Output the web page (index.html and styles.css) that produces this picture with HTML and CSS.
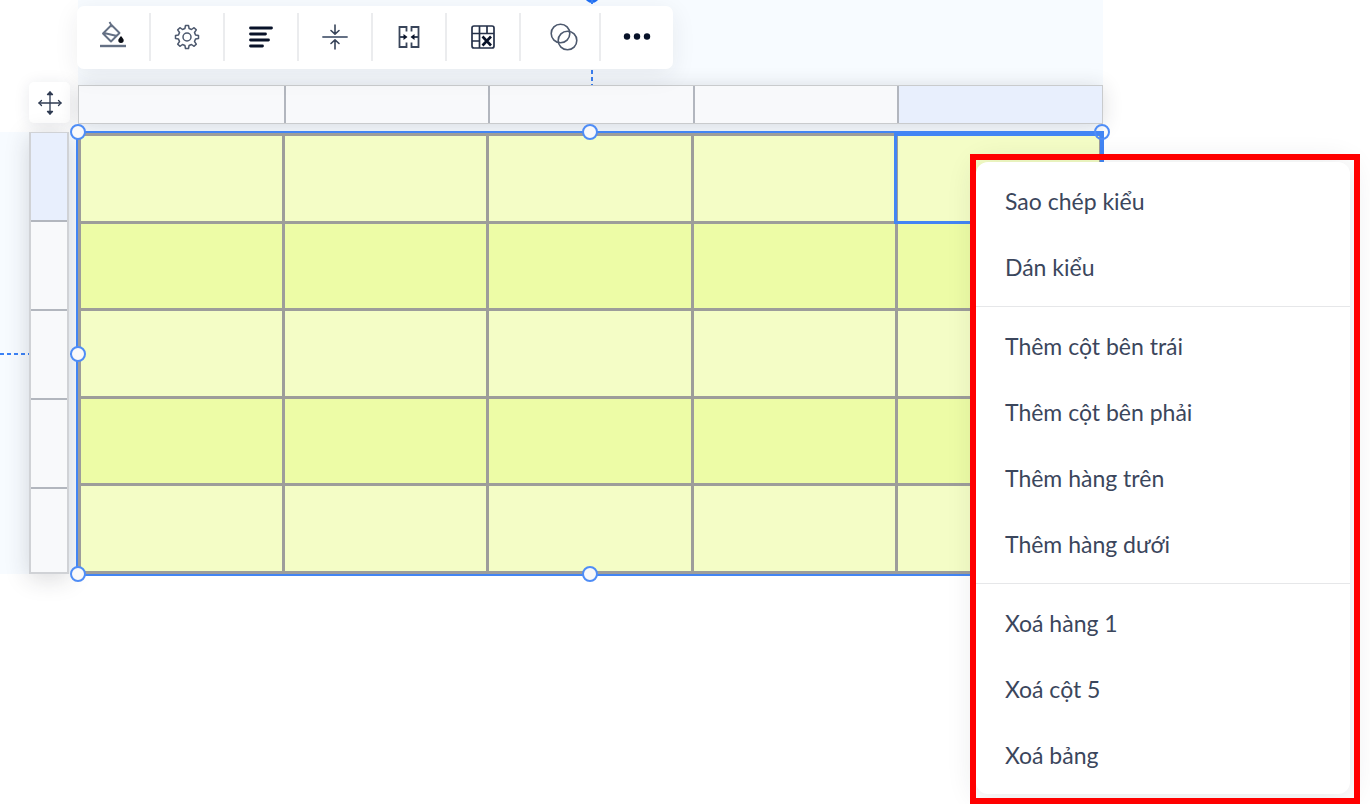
FILE: index.html
```html
<!DOCTYPE html>
<html lang="vi">
<head>
<meta charset="utf-8">
<meta name="viewport" content="width=device-width, initial-scale=1">
<title>Bảng</title>
<link rel="stylesheet" href="styles.css">
</head>
<body>
<main class="editor">
  <div class="corner">
    <button class="move" type="button" aria-label="Di chuyển">
      <svg width="24" height="24" viewBox="0 0 24 24" fill="none" stroke="#2f3b52" stroke-width="1.3" stroke-linecap="round" stroke-linejoin="round"><path d="M12 1v22M1 12h22"/><path d="M9.5 3.5 12 1l2.500 2.500zM9.500 20.500 12 23l2.500-2.500z" fill="#2f3b52"/><path d="M3.500 9.500 1 12l2.500 2.500M20.500 9.500 23 12l-2.500 2.500"/></svg>
    </button>
  </div>

  <section class="top-band">
    <span class="guide-dot"></span>
    <span class="guide guide-vertical"></span>
    <div class="toolbar" role="toolbar">
      <button class="tool" type="button" aria-label="Màu nền">
        <svg width="28" height="34" viewBox="0 0 28 34" fill="none" stroke="#647084" stroke-width="1.900" stroke-linejoin="round"><path d="M12.500 5 20.500 13 12 21.500 4 13.500zM10.500 2l3 5M5 13l13 3"/><path d="M1 26h26" stroke-width="2.400"/><path d="M22 16c1.500 2 2.700 3 2.700 4.200a2.700 2.700 0 0 1-5.400 0c0-1.200 1.200-2.200 2.700-4.200z" fill="#0a0d14" stroke="none"/></svg>
      </button>
      <button class="tool" type="button" aria-label="Cài đặt">
        <svg width="26" height="26" viewBox="0 0 26 26" fill="none" stroke="#4d596e" stroke-width="1.500" stroke-linejoin="round"><circle cx="13" cy="13" r="4"/><path d="M11.500 1.500h3l.6 3 2.400 1 2.600-1.800 2.200 2.200-1.800 2.600 1 2.400 3 .6v3l-3 .6-1 2.400 1.800 2.600-2.200 2.200-2.600-1.800-2.400 1-.6 3h-3l-.6-3-2.400-1-2.600 1.800-2.200-2.200 1.800-2.600-1-2.400-3-.6v-3l3-.6 1-2.400-1.800-2.600 2.200-2.200 2.600 1.800 2.400-1z"/></svg>
      </button>
      <button class="tool" type="button" aria-label="Căn trái">
        <svg width="26" height="26" viewBox="0 0 26 26" stroke="#081229" stroke-width="2.800" stroke-linecap="round"><path d="M2.500 4h21M2.500 10h15M2.500 16h18M2.500 22h12"/></svg>
      </button>
      <button class="tool" type="button" aria-label="Căn giữa dọc">
        <svg width="26" height="26" viewBox="0 0 26 26" fill="none" stroke="#39455a" stroke-width="1.600" stroke-linecap="round" stroke-linejoin="round"><path d="M1 13h24" stroke="#647084" stroke-width="1.800"/><path d="M13 1v9M9 6.500l4 3.700 4-3.700M13 25v-9M9 19.500l4-3.700 4 3.700"/></svg>
      </button>
      <button class="tool" type="button" aria-label="Gộp ô">
        <svg width="26" height="26" viewBox="0 0 26 26" fill="none" stroke="#39455a" stroke-width="1.800"><path d="M10.500 7.500V3h-7v20h7v-4.500M15.500 7.500V3h7v20h-7v-4.500M4 13h5M22 13h-5"/><path d="M7.500 10l4 3-4 3zM18.500 10l-4 3 4 3z" fill="#081229" stroke="none"/></svg>
      </button>
      <button class="tool" type="button" aria-label="Xoá ô">
        <svg width="26" height="26" viewBox="0 0 26 26" fill="none" stroke="#253149" stroke-width="1.700"><rect x="2" y="2" width="22" height="22" rx="2"/><path d="M2 9.500h22M9.500 2v22M17 2v7M2 17h7"/><path d="m12.500 12.500 8.500 9M21 12.500l-8.500 9" stroke="#081229" stroke-width="2.600"/></svg>
      </button>
      <button class="tool tool-wide" type="button" aria-label="Độ trong suốt">
        <svg width="28" height="28" viewBox="0 0 28 28" fill="none" stroke="#4d596e" stroke-width="1.600"><circle cx="10.500" cy="10.500" r="9.300"/><circle cx="17.500" cy="17.500" r="9.300"/></svg>
      </button>
      <button class="tool" type="button" aria-label="Thêm">
        <svg width="28" height="28" viewBox="0 0 28 28" fill="#081229"><circle cx="4" cy="13.500" r="3.200"/><circle cx="14" cy="13.500" r="3.200"/><circle cx="24" cy="13.500" r="3.200"/></svg>
      </button>
    </div>
    <div class="column-heads">
      <span></span><span></span><span></span><span></span><span class="current"></span>
    </div>
  </section>

  <section class="left-band">
    <span class="guide guide-horizontal"></span>
    <div class="row-heads">
      <span class="current"></span><span></span><span></span><span></span><span></span>
    </div>
  </section>

  <section class="selection">
    <table class="cells">
      <tbody>
        <tr><td></td><td></td><td></td><td></td><td class="active"></td></tr>
        <tr><td></td><td></td><td></td><td></td><td></td></tr>
        <tr><td></td><td></td><td></td><td></td><td></td></tr>
        <tr><td></td><td></td><td></td><td></td><td></td></tr>
        <tr><td></td><td></td><td></td><td></td><td></td></tr>
      </tbody>
    </table>
    <span class="handle top left"></span>
    <span class="handle top center"></span>
    <span class="handle top right"></span>
    <span class="handle middle left"></span>
    <span class="handle bottom left"></span>
    <span class="handle bottom center"></span>
  </section>
</main>

<aside class="menu-frame">
  <div class="menu" role="menu">
    <div class="menu-group">
      <button type="button" role="menuitem">Sao chép kiểu</button>
      <button type="button" role="menuitem">Dán kiểu</button>
    </div>
    <div class="menu-group">
      <button type="button" role="menuitem">Thêm cột bên trái</button>
      <button type="button" role="menuitem">Thêm cột bên phải</button>
      <button type="button" role="menuitem">Thêm hàng trên</button>
      <button type="button" role="menuitem">Thêm hàng dưới</button>
    </div>
    <div class="menu-group">
      <button type="button" role="menuitem">Xoá hàng 1</button>
      <button type="button" role="menuitem">Xoá cột 5</button>
      <button type="button" role="menuitem">Xoá bảng</button>
    </div>
  </div>
</aside>
</body>
</html>
```
FILE: styles.css
```css
* {
  box-sizing: border-box;
}

body {
  position: relative;
  min-height: 100vh;
  margin: 0;
  background: #fff;
  color: #3b465c;
  font-family: Lato, "Noto Sans", sans-serif;
}

button {
  border: 0;
  background: none;
  padding: 0;
  font: inherit;
  color: inherit;
  cursor: pointer;
}

svg {
  display: block;
}

.editor {
  display: grid;
  grid-template-columns: 78px 1fr;
  grid-template-rows: 132px auto;
  padding-right: 267px;
}

/* Corner and top band */
.corner {
  display: flex;
  justify-content: flex-end;
  align-items: flex-end;
  padding: 0 8px 9px 0;
}

.move {
  display: grid;
  place-items: center;
  width: 41px;
  height: 41px;
  border-radius: 5px;
  background: #fff;
  box-shadow: 0 2px 16px rgba(30, 40, 70, 0.1);
}

.top-band {
  position: relative;
  background: #f7fbff;
  padding-top: 6px;
}

.toolbar {
  position: relative;
  z-index: 1;
  display: flex;
  width: 596px;
  height: 63px;
  margin-left: -1px;
  padding: 7px 0 8px;
  border-radius: 7px;
  background: #fff;
  box-shadow: 0 6px 24px rgba(40, 40, 50, 0.08);
}

.tool {
  flex: 1;
  display: grid;
  place-items: center;
  border-right: 2px solid #ebecee;
}

.tool:last-child {
  border-right: 0;
}

.tool-wide {
  flex: 0 0 80px;
  padding-left: 8px;
}

.column-heads {
  position: relative;
  display: grid;
  grid-template-columns: repeat(5, 1fr);
  height: 39px;
  margin-top: 16px;
  border: 1px solid #c9cbcd;
  background: #f8f9fb;
  box-shadow: 0 2px 20px rgba(40, 40, 50, 0.16);
}

.column-heads span + span {
  border-left: 2px solid #b2b6be;
}

.column-heads .current,
.row-heads .current {
  background: #e8effd;
}

.guide {
  position: absolute;
}

.guide-vertical {
  top: 0;
  bottom: 8px;
  left: 50%;
  width: 2px;
  background: repeating-linear-gradient(#3b82f6 0 4px, transparent 4px 7px);
}

.guide-dot {
  position: absolute;
  top: -10px;
  left: 50%;
  width: 14px;
  height: 13px;
  margin-left: -6px;
  border-radius: 50%;
  background: #1f6ff5;
}

.guide-horizontal {
  left: 0;
  right: 0;
  top: 50%;
  height: 2px;
  background: repeating-linear-gradient(90deg, #3b82f6 0 4px, transparent 4px 7px);
}

/* Row heads */
.left-band {
  position: relative;
  background: #f7fbff;
  padding: 0 9px 0 29px;
  margin-bottom: 2px;
}

.row-heads {
  position: relative;
  display: grid;
  grid-template-rows: 87px repeat(3, 89px) 1fr;
  height: 442px;
  border: 2px solid #d0d2d6;
  border-top-width: 1px;
  background: #f8f9fb;
  box-shadow: 0 4px 24px rgba(40, 40, 50, 0.18);
}

.row-heads span + span {
  border-top: 2px solid #b2b6be;
}

/* Selected table */
.selection {
  position: relative;
  margin: -1px -1px 0 -2px;
  border: 2px solid #4285f4;
}

.cells {
  width: 100%;
  height: 441px;
  border-collapse: collapse;
  table-layout: fixed;
}

.cells td {
  padding: 0;
  border: 3px solid #9d9d9a;
  background: #f4fdc6;
}

.cells tr:nth-child(even) td {
  background: #edfca6;
}

.cells .active {
  outline: 3px solid #4285f4;
  outline-offset: -1px;
}

.handle {
  position: absolute;
  width: 16px;
  height: 16px;
  margin: -8px;
  border: 2px solid #4f8df6;
  border-radius: 50%;
  background: #f9f9fa;
}

.handle.top {
  top: -1px;
}

.handle.middle {
  top: 50%;
}

.handle.bottom {
  top: 100%;
}

.handle.left {
  left: 0;
}

.handle.center {
  left: 50%;
}

.handle.right {
  left: 100%;
  background: transparent;
}

/* Context menu */
.menu-frame {
  position: absolute;
  z-index: 2;
  top: 154px;
  right: 10px;
  width: 390px;
  padding: 8px 10px 10px 6px;
}

.menu-frame::after {
  content: "";
  position: absolute;
  inset: 0;
  border: 6px solid #f00;
  pointer-events: none;
}

.menu {
  border-radius: 12px;
  background: #fff;
  box-shadow: 0 2px 30px rgba(30, 40, 60, 0.12);
}

.menu-group {
  display: flex;
  flex-direction: column;
  padding: 6px 0;
}

.menu-group + .menu-group {
  border-top: 1px solid #e6e7e9;
}

.menu-group button {
  height: 66px;
  padding-left: 29px;
  font-size: 23px;
  line-height: 30px;
  text-align: left;
}
```
